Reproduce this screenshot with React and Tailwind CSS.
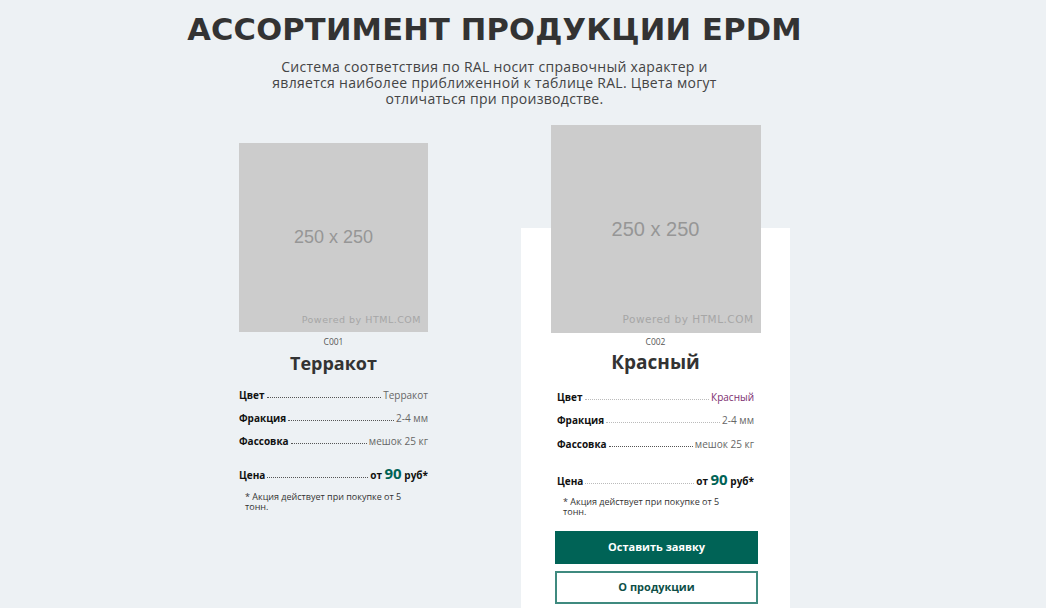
import React from "react";

function Placeholder({ size, textClass, footClass }) {
  return (
    <div className={`${size} bg-[#cccccc] relative flex items-center justify-center`}>
      <span className={`${textClass} text-[#969696] font-['Liberation_Sans',sans-serif]`}>250 x 250</span>
      <span className={`absolute right-[7px] bottom-[5px] ${footClass} text-[#a6a6a6] tracking-[0.5px] font-['DejaVu_Sans',sans-serif]`}>
        Powered by HTML.COM
      </span>
    </div>
  );
}

function Row({ label, value, valueClass = "text-[#666]", dots = "border-[#555]", className = "" }) {
  return (
    <div className={`flex items-end text-[10px] leading-[12px] ${className}`}>
      <span className="font-bold text-[#111]">{label}</span>
      <span className={`flex-1 mx-[2px] mb-[3px] border-b border-dotted ${dots}`} />
      <span className={valueClass}>{value}</span>
    </div>
  );
}

function Price({ dots, className }) {
  return (
    <div className={`flex items-end leading-[18px] ${className}`}>
      <span className="font-bold text-[10px] text-[#111] leading-[14px]">Цена</span>
      <span className={`flex-1 mx-[2px] mb-[4px] border-b border-dotted ${dots}`} />
      <span className="font-bold text-[10px] text-[#111] leading-[14px]">
        от <span className="text-[15px] text-[#006356] leading-[18px]">90</span> руб*
      </span>
    </div>
  );
}

export default function App() {
  return (
    <div className="min-h-screen bg-[#edf1f4] font-['Open_Sans',sans-serif] text-[#333] overflow-hidden">
      <div className="w-[989px] h-[608px] flex flex-col items-center">
        <h1 className="mt-[11px] text-[30.5px] leading-[38px] font-bold tracking-[0.2px] text-[#333] font-['DejaVu_Sans',sans-serif]">
          АССОРТИМЕНТ ПРОДУКЦИИ EPDM
        </h1>
        <p className="mt-[10px] text-[14px] leading-[16px] tracking-[0.3px] text-center text-[#444]">
          Система соответствия по RAL носит справочный характер и
          <br />
          является наиболее приближенной к таблице RAL. Цвета могут
          <br />
          отличаться при производстве.
        </p>

        <div className="flex items-start gap-[53px] mt-[36px]">
          {/* card 1 */}
          <div className="w-[269px] px-[40px] flex flex-col">
            <Placeholder size="w-[189px] h-[189px]" textClass="text-[18px]" footClass="text-[9.5px]" />
            <div className="mt-[5px] text-[8.5px] leading-[10px] text-center text-[#555]">C001</div>
            <div className="mt-[5px] text-[18px] leading-[22px] font-bold text-center text-[#333]">Терракот</div>
            <Row className="mt-[15px]" label="Цвет" value="Терракот" />
            <Row className="mt-[11px]" label="Фракция" value="2-4 мм" />
            <Row className="mt-[11px]" label="Фассовка" value="мешок 25 кг" />
            <Price className="mt-[17px]" dots="border-[#555]" />
            <p className="mt-[10px] ml-[6px] text-[9px] leading-[10px] text-[#333]">
              * Акция действует при покупке от 5
              <br />
              тонн.
            </p>
          </div>

          {/* card 2 */}
          <div className="w-[269px] mt-[85px] h-[400px] bg-white px-[34px] flex flex-col">
            <div className="-mt-[103px] self-center">
              <Placeholder size="w-[210px] h-[208px]" textClass="text-[20px]" footClass="text-[10.5px]" />
            </div>
            <div className="mt-[4px] text-[8.5px] leading-[10px] text-center text-[#555]">C002</div>
            <div className="mt-[4px] text-[19px] leading-[22px] font-bold text-center text-[#333]">Красный</div>
            <div className="mx-[2px] flex flex-col">
              <Row className="mt-[18px]" label="Цвет" value="Красный" valueClass="text-[#7b2d6f]" dots="border-[#bbb]" />
              <Row className="mt-[11px]" label="Фракция" value="2-4 мм" dots="border-[#bbb]" />
              <Row className="mt-[12px]" label="Фассовка" value="мешок 25 кг" dots="border-[#555]" />
              <Price className="mt-[20px]" dots="border-[#bbb]" />
              <p className="mt-[9px] ml-[6px] text-[9px] leading-[10px] text-[#333]">
                * Акция действует при покупке от 5
                <br />
                тонн.
              </p>
            </div>
            <button className="mt-[14px] h-[33px] w-[203px] bg-[#006356] text-white text-[11px] font-bold">
              Оставить заявку
            </button>
            <button className="mt-[7px] h-[33px] w-[203px] bg-white border-2 border-[#3f8a7f] text-[#0d4f47] text-[11px] font-bold">
              О продукции
            </button>
          </div>
        </div>
      </div>
    </div>
  );
}
